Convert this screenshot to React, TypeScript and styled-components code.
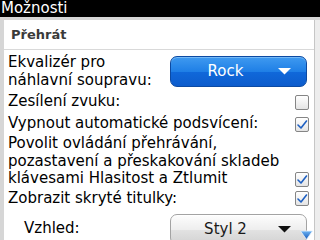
import React from "react";
import styled, { createGlobalStyle } from "styled-components";

const GlobalStyle = createGlobalStyle`
  html, body {
    margin: 0;
    padding: 0;
    width: 320px;
    height: 240px;
    overflow: hidden;
    background: #d6d6d6;
  }
  * {
    box-sizing: border-box;
  }
`;

export default function App() {
  return (
    <>
      <GlobalStyle />
      <Screen>
        <TitleBar>Možnosti</TitleBar>
        <Frame>
          <Panel>
            <SectionHeader>Přehrát</SectionHeader>
            <Row $pt={4} $pb={2}>
              <Label>
                Ekvalizér pro
                <br />
                náhlavní soupravu:
              </Label>
              <Choice $variant="blue">
                <ChoiceText>Rock</ChoiceText>
                <DropArrow $color="#ffffff" />
              </Choice>
            </Row>
            <CheckRow>
              <Label>Zesílení zvuku:</Label>
              <CheckBox checked={false} />
            </CheckRow>
            <CheckRow>
              <Label>Vypnout automatické podsvícení:</Label>
              <CheckBox checked />
            </CheckRow>
            <MultiRow>
              <Label>
                Povolit ovládání přehrávání,
                <br />
                pozastavení a přeskakování skladeb
                <br />
                klávesami Hlasitost a Ztlumit
              </Label>
              <CheckBox checked />
            </MultiRow>
            <CheckRow>
              <Label>Zobrazit skryté titulky:</Label>
              <CheckBox checked />
            </CheckRow>
            <Row $pt={4} $pb={0}>
              <Label $indent={16}>Vzhled:</Label>
              <Choice $variant="gray">
                <ChoiceText>Styl 2</ChoiceText>
                <DropArrow $color="#111111" />
              </Choice>
            </Row>
          </Panel>
          <ScrollTrack />
        </Frame>
        <ScrollDown>
          <svg width="13" height="10" viewBox="0 0 13 10">
            <defs>
              <linearGradient id="sd" x1="0" y1="0" x2="0" y2="1">
                <stop offset="0" stopColor="#6db4f4" />
                <stop offset="1" stopColor="#1457b8" />
              </linearGradient>
            </defs>
            <path d="M0.5 1 L12.5 1 L6.5 9.5 Z" fill="url(#sd)" stroke="#e8f2fc" strokeWidth="0.8" />
          </svg>
        </ScrollDown>
      </Screen>
    </>
  );
}

function CheckBox({ checked }: { checked: boolean }) {
  return (
    <Box>
      {checked && (
        <svg width="12" height="13" viewBox="0 0 12 13">
          <path
            d="M2 7 L5 10 L10.5 3"
            fill="none"
            stroke="#1d5fc2"
            strokeWidth="1.6"
            strokeLinecap="round"
            strokeLinejoin="round"
          />
        </svg>
      )}
    </Box>
  );
}

function DropArrow({ $color }: { $color: string }) {
  return (
    <ArrowBox>
      <svg width="13" height="7" viewBox="0 0 13 7">
        <path d="M0 0 L13 0 L6.5 6.5 Z" fill={$color} />
      </svg>
    </ArrowBox>
  );
}

const Screen = styled.div`
  position: relative;
  display: flex;
  flex-direction: column;
  width: 320px;
  height: 240px;
  overflow: hidden;
  background: #d6d6d6;
  font-family: "DejaVu Sans", "Liberation Sans", sans-serif;
`;

const TitleBar = styled.div`
  height: 17px;
  flex-shrink: 0;
  padding-left: 1px;
  background: #000000;
  color: #ffffff;
  font-size: 15px;
  line-height: 17px;
  white-space: nowrap;
`;

const Frame = styled.div`
  display: flex;
  flex: 1;
  padding: 3px 0 0 4px;
  min-height: 0;
`;

const Panel = styled.div`
  display: flex;
  flex-direction: column;
  flex: 1;
  background: #ffffff;
  border-right: 1px solid #c6c6c6;
  overflow: hidden;
`;

const ScrollTrack = styled.div`
  width: 5px;
  background: #ededed;
`;

const SectionHeader = styled.div`
  display: flex;
  align-items: center;
  height: 30px;
  flex-shrink: 0;
  padding-left: 7px;
  border-bottom: 1px solid #d9d9d9;
  color: #3a3a3a;
  font-size: 13px;
  font-weight: bold;
`;

const Row = styled.div<{ $pt: number; $pb: number }>`
  display: flex;
  align-items: center;
  flex-shrink: 0;
  padding: ${(p) => p.$pt}px 7px ${(p) => p.$pb}px 4px;
`;

const CheckRow = styled.div`
  display: flex;
  align-items: center;
  justify-content: space-between;
  flex-shrink: 0;
  min-height: 22px;
  padding: 0 5px 0 4px;
`;

const MultiRow = styled(CheckRow)`
  align-items: flex-end;

  & > div:last-child {
    margin-bottom: 1px;
  }
`;

const Label = styled.span<{ $indent?: number }>`
  padding-left: ${(p) => p.$indent ?? 0}px;
  color: #000000;
  font-size: 15px;
  line-height: 17.5px;
  white-space: nowrap;
`;

const Choice = styled.div<{ $variant: "blue" | "gray" }>`
  display: flex;
  align-items: center;
  width: 137px;
  height: 31px;
  margin-left: auto;
  padding: 0 15px 0 10px;
  flex-shrink: 0;
  border-radius: 7px;
  border: 1px solid ${(p) => (p.$variant === "blue" ? "#0c4aa2" : "#a3a3a3")};
  background: ${(p) =>
    p.$variant === "blue"
      ? "linear-gradient(#3f9af0, #1f7fe6 50%, #1068da 51%, #0d5ccc)"
      : "linear-gradient(#fdfdfd, #eeeeee 50%, #e2e2e2 51%, #d2d2d2)"};
  box-shadow: inset 0 1px 0 ${(p) => (p.$variant === "blue" ? "#74b8f6" : "#ffffff")};
  color: ${(p) => (p.$variant === "blue" ? "#ffffff" : "#1a1a1a")};
`;

const ChoiceText = styled.span`
  flex: 1;
  text-align: center;
  font-size: 15px;
  line-height: 17px;
`;

const ArrowBox = styled.div`
  display: flex;
  align-items: center;
  margin-left: 8px;
  height: 7px;
`;

const Box = styled.div`
  display: flex;
  align-items: center;
  justify-content: center;
  width: 14px;
  height: 15px;
  flex-shrink: 0;
  border: 1px solid #858585;
  border-radius: 2px;
  background: linear-gradient(#ffffff, #e4e4e4);
`;

const ScrollDown = styled.div`
  position: absolute;
  right: 7px;
  bottom: 0;
  width: 13px;
  height: 10px;
  line-height: 0;
`;
